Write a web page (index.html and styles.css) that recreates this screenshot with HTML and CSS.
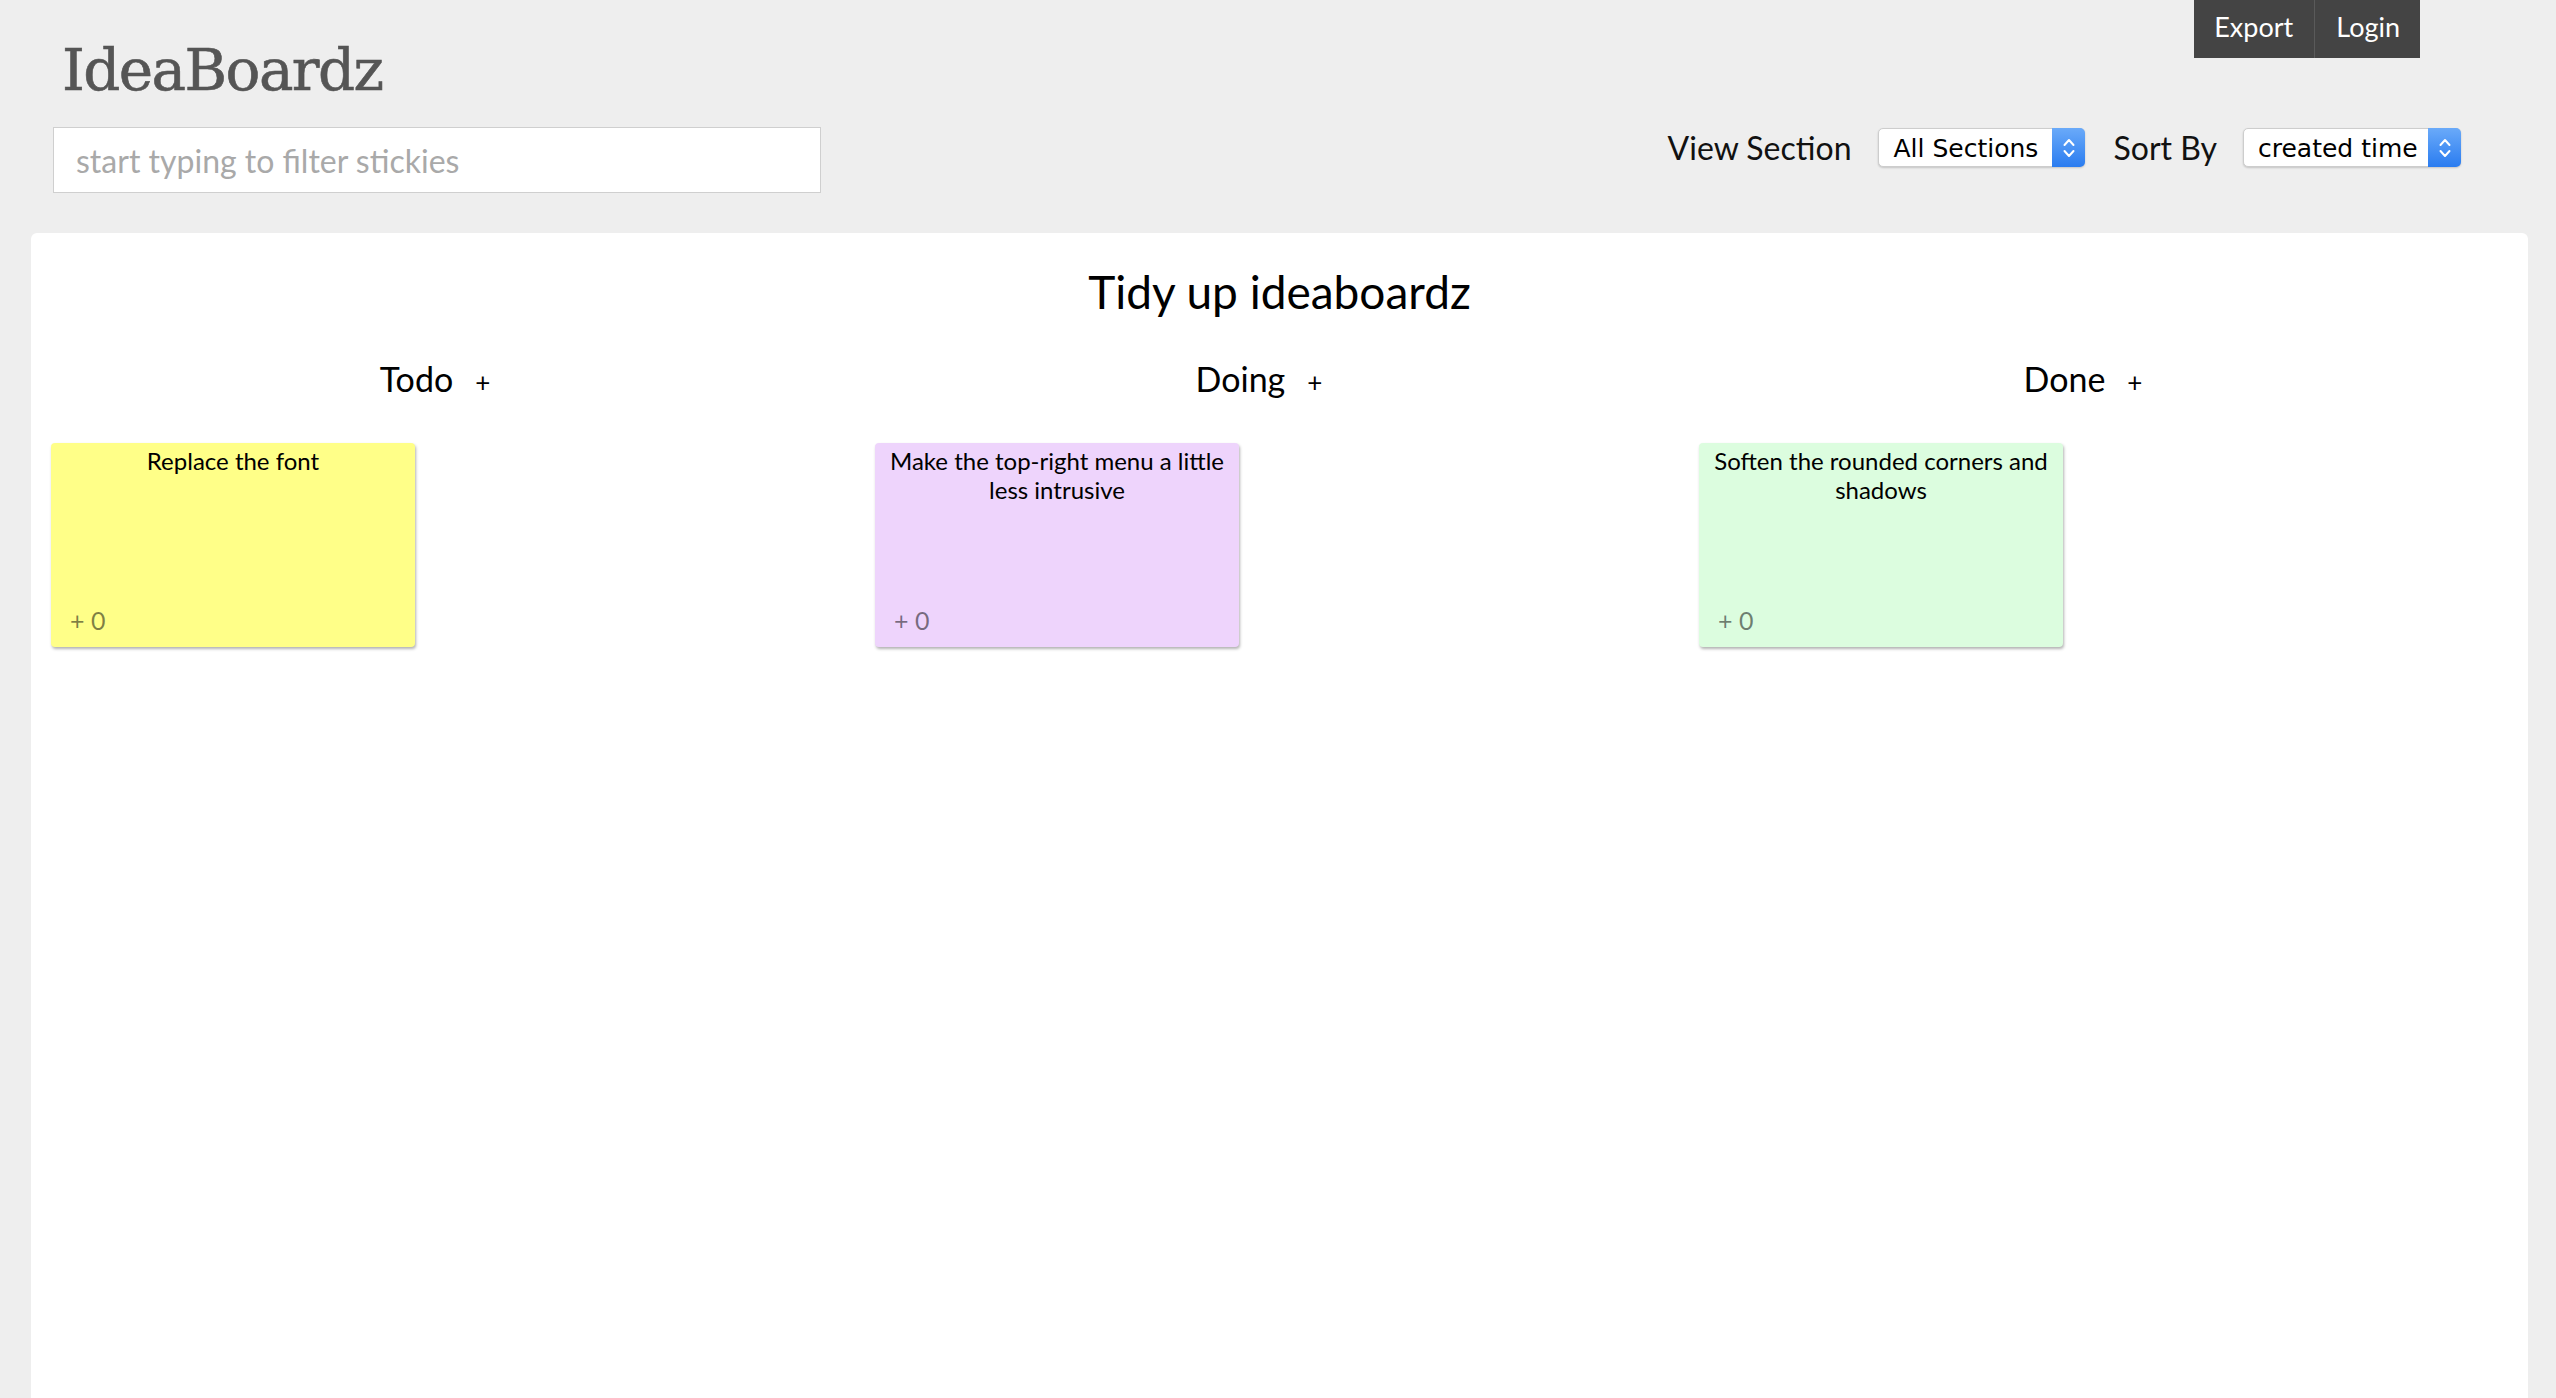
FILE: index.html
```html
<!DOCTYPE html>
<html lang="en">
<head>
<meta charset="utf-8">
<title>IdeaBoardz - Tidy up ideaboardz</title>
<link rel="stylesheet" href="styles.css">
</head>
<body>
<header class="header">
  <div class="brand">
    <h1 class="logo">IdeaBoardz</h1>
    <input class="filter" type="text" placeholder="start typing to filter stickies">
  </div>
  <div class="tools">
    <nav class="topmenu">
      <a class="menu-item" href="#">Export</a>
      <a class="menu-item divider" href="#">Login</a>
    </nav>
    <div class="controls">
      <span class="ctl-label">View Section</span>
      <div class="select sel-section">
        <span class="select-text">All Sections</span>
        <span class="select-arrow">
          <svg width="16" height="28" viewBox="0 0 16 28"><path d="M3.5 11 L8 6 L12.5 11" fill="none" stroke="#fff" stroke-width="2" stroke-linecap="round" stroke-linejoin="round"/><path d="M3.5 17 L8 22 L12.5 17" fill="none" stroke="#fff" stroke-width="2" stroke-linecap="round" stroke-linejoin="round"/></svg>
        </span>
      </div>
      <span class="ctl-label sort-label">Sort By</span>
      <div class="select sel-sort">
        <span class="select-text">created time</span>
        <span class="select-arrow">
          <svg width="16" height="28" viewBox="0 0 16 28"><path d="M3.5 11 L8 6 L12.5 11" fill="none" stroke="#fff" stroke-width="2" stroke-linecap="round" stroke-linejoin="round"/><path d="M3.5 17 L8 22 L12.5 17" fill="none" stroke="#fff" stroke-width="2" stroke-linecap="round" stroke-linejoin="round"/></svg>
        </span>
      </div>
    </div>
  </div>
</header>
<main class="board">
  <h2 class="board-title">Tidy up ideaboardz</h2>
  <div class="sections">
    <section class="section">
      <h3 class="section-title">Todo<span class="add">+</span></h3>
      <div class="sticky yellow">
        <p class="sticky-text">Replace the font</p>
        <span class="votes">+ 0</span>
      </div>
    </section>
    <section class="section">
      <h3 class="section-title">Doing<span class="add">+</span></h3>
      <div class="sticky purple">
        <p class="sticky-text">Make the top-right menu a little less intrusive</p>
        <span class="votes">+ 0</span>
      </div>
    </section>
    <section class="section">
      <h3 class="section-title">Done<span class="add">+</span></h3>
      <div class="sticky green">
        <p class="sticky-text">Soften the rounded corners and shadows</p>
        <span class="votes">+ 0</span>
      </div>
    </section>
  </div>
</main>
</body>
</html>
```
FILE: styles.css
```css
html, body {
  margin: 0;
  padding: 0;
}
body {
  background: #eeeeee;
  font-family: Lato, "Open Sans", sans-serif;
  color: #111;
}
.header {
  display: flex;
  justify-content: space-between;
  height: 233px;
  padding: 0 95px 0 53px;
  box-sizing: border-box;
}
.brand {
  display: flex;
  flex-direction: column;
}
.logo {
  margin: 41px 0 0 9px;
  font-family: "DejaVu Serif", serif;
  font-weight: normal;
  font-size: 58px;
  line-height: 58px;
  letter-spacing: -1.6px;
  color: #555;
  -webkit-text-stroke: 0.6px #555;
}
.filter {
  margin-top: 28px;
  width: 768px;
  height: 66px;
  box-sizing: border-box;
  border: 1px solid #cfcfcf;
  background: #fff;
  padding: 0 22px;
  font-family: Lato, sans-serif;
  font-size: 32px;
  color: #333;
  outline: none;
}
.filter::placeholder {
  color: #a9a9a9;
}
.tools {
  display: flex;
  flex-direction: column;
  align-items: flex-end;
}
.topmenu {
  display: flex;
  height: 58px;
  background: #444;
  margin-right: 41px;
}
.menu-item {
  display: flex;
  align-items: center;
  padding: 0 21px 5px 20px;
  color: #fff;
  text-decoration: none;
  font-size: 27px;
}
.menu-item.divider {
  border-left: 1px solid #5a5a5a;
  padding-left: 21px;
  padding-right: 20px;
}
.controls {
  display: flex;
  align-items: center;
  margin-top: 70px;
  height: 39px;
}
.ctl-label {
  font-size: 32px;
  color: #111;
  margin-right: 27px;
}
.sort-label {
  margin-left: 28px;
  margin-right: 26px;
}
.select {
  display: flex;
  align-items: stretch;
  justify-content: space-between;
  height: 39px;
  box-sizing: border-box;
  background: #fff;
  border: 1px solid #cdcdcd;
  border-radius: 5px;
  box-shadow: 0 1px 2px rgba(0, 0, 0, 0.18);
  font-family: "DejaVu Sans", sans-serif;
  font-size: 25px;
  color: #000;
}
.sel-section { width: 207px; }
.sel-sort { width: 218px; }
.select-text {
  display: flex;
  align-items: center;
  padding: 2px 0 0 14px;
  white-space: nowrap;
}
.select-arrow {
  display: flex;
  align-items: center;
  justify-content: center;
  width: 33px;
  flex: none;
  margin: -1px -1px -1px 0;
  border-radius: 0 5px 5px 0;
  background: linear-gradient(#6aaaf9, #2a7cf0);
}
.board {
  margin: 0 28px 0 31px;
  background: #fff;
  border-radius: 6px 6px 0 0;
  min-height: calc(100vh - 233px);
  padding-top: 31px;
  box-sizing: border-box;
}
.board-title {
  margin: 0;
  text-align: center;
  font-weight: normal;
  font-size: 46px;
  line-height: 1.2;
  color: #000;
}
.sections {
  display: flex;
  margin-top: 40px;
}
.section {
  width: 33%;
}
.section-title {
  margin: 0;
  padding-right: 16px;
  text-align: center;
  font-weight: normal;
  font-size: 34px;
  line-height: 1.2;
  color: #000;
}
.add {
  font-size: 26px;
  margin-left: 22px;
}
.sticky {
  margin: 43px 0 0 20px;
  width: 364px;
  height: 204px;
  box-sizing: border-box;
  border-radius: 4px;
  box-shadow: 1px 2px 3px rgba(0, 0, 0, 0.3);
  display: flex;
  flex-direction: column;
  justify-content: space-between;
  padding: 3px 4px 12px 19px;
}
.sticky.yellow { background: #ffff88; }
.sticky.purple { background: #eed4fc; }
.sticky.green { background: #dcfddf; }
.sticky-text {
  margin: 0 0 0 -15px;
  text-align: center;
  font-size: 24px;
  line-height: 29px;
  color: #000;
}
.votes {
  font-size: 25px;
  color: rgba(0, 0, 0, 0.5);
}
```
